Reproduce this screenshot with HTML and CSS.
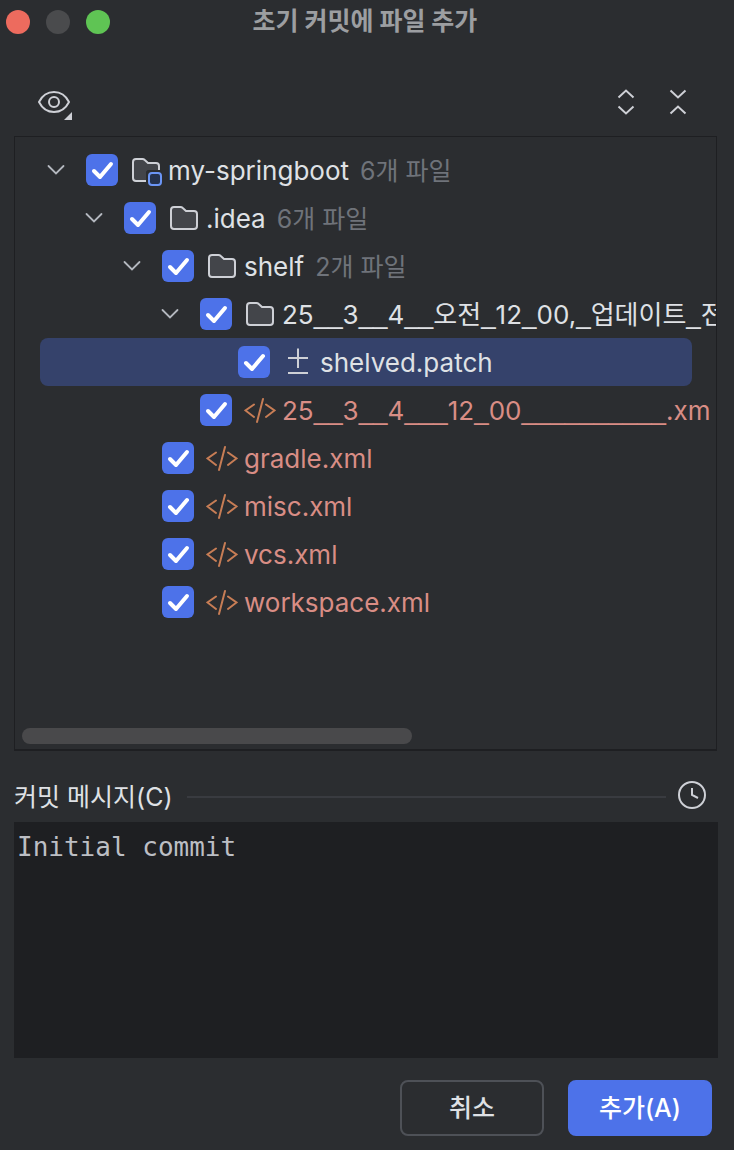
FILE: index.html
```html
<!DOCTYPE html>
<html lang="ko">
<head>
    <meta charset="UTF-8">
    <meta name="viewport" content="width=device-width, initial-scale=1.0">
    <title>초기 커밋에 파일 추가</title>
    <link rel="stylesheet" href="styles.css">
</head>
<body>
    <!-- shared icons -->
    <svg class="sprite" aria-hidden="true">
        <symbol id="i-chevron" viewBox="0 0 32 32">
            <path d="M8.500 12l7.500 7.500 7.500-7.500" fill="none" stroke="#b4b8bf" stroke-width="1.800" stroke-linecap="round"/>
        </symbol>
        <symbol id="i-folder" viewBox="0 0 32 32">
            <path d="M3 8a3 3 0 0 1 3-3h6.500q1.200 0 2 .8L18 9h8a3 3 0 0 1 3 3v12a3 3 0 0 1-3 3H6a3 3 0 0 1-3-3z" fill="#43454a" stroke="#ced0d6" stroke-width="2" stroke-linejoin="round"/>
        </symbol>
        <symbol id="i-module" viewBox="0 0 32 32">
            <path d="M3 8a3 3 0 0 1 3-3h6.500q1.200 0 2 .8L18 9h8a3 3 0 0 1 3 3v4H19a3 3 0 0 0-3 3v8H6a3 3 0 0 1-3-3z" fill="#43454a"/>
            <path d="M16 27H6a3 3 0 0 1-3-3V8a3 3 0 0 1 3-3h6.500q1.200 0 2 .8L18 9h8a3 3 0 0 1 3 3v4" fill="none" stroke="#ced0d6" stroke-width="2"/>
            <rect x="16" y="16" width="16" height="16" rx="4" fill="#2b2d30"/>
            <rect x="19" y="19" width="12" height="12" rx="3" fill="#25324d" stroke="#6b95f5" stroke-width="2"/>
        </symbol>
        <symbol id="i-xml" viewBox="0 0 32 32">
            <path d="M10 10.500L1.500 16.500l8.500 6.500M22 10.500l8.500 6L22 23M19 5l-6 23" fill="none" stroke="#c77d55" stroke-width="2" stroke-linecap="round"/>
        </symbol>
        <symbol id="i-patch" viewBox="0 0 32 32">
            <path d="M16 2.500v19.500M6 12h20M6 27h20" fill="none" stroke="#ced0d6" stroke-width="2"/>
        </symbol>
    </svg>

    <form class="dialog">
        <header class="titlebar">
            <span class="light close"></span>
            <span class="light minimize"></span>
            <span class="light maximize"></span>
            <h1>초기 커밋에 파일 추가</h1>
        </header>

        <div class="toolbar">
            <button type="button" class="tool view" aria-label="보기 옵션">
                <svg viewBox="0 0 40 40" width="40" height="40">
                    <path d="M5 20C8 14 13.500 10 20 10s12 4 15 10c-3 6-8.500 10-15 10S8 26 5 20z" fill="none" stroke="#ced0d6" stroke-width="2" stroke-linejoin="round"/>
                    <circle cx="20" cy="20" r="5" fill="none" stroke="#ced0d6" stroke-width="2"/>
                    <path d="M38 30v8h-8z" fill="#ced0d6"/>
                </svg>
            </button>
            <button type="button" class="tool" aria-label="모두 펼치기">
                <svg viewBox="0 0 32 32" width="32" height="32">
                    <path d="M8.500 11.500L16 4.500l7.500 7M8.500 20.500l7.500 7 7.500-7" fill="none" stroke="#ced0d6" stroke-width="2"/>
                </svg>
            </button>
            <button type="button" class="tool" aria-label="모두 접기">
                <svg viewBox="0 0 32 32" width="32" height="32">
                    <path d="M8.500 4.500l7.500 7 7.500-7M8.500 27.500l7.500-7 7.500 7" fill="none" stroke="#ced0d6" stroke-width="2"/>
                </svg>
            </button>
        </div>

        <div class="tree">
            <ul class="rows">
                <li class="row">
                    <button type="button" class="toggle" aria-label="접기"><svg><use href="#i-chevron"/></svg></button>
                    <input type="checkbox" id="f1" checked>
                    <label for="f1"><svg><use href="#i-module"/></svg><span class="name">my-springboot</span><span class="count">6개 파일</span></label>
                </li>
                <li class="row level-1">
                    <button type="button" class="toggle" aria-label="접기"><svg><use href="#i-chevron"/></svg></button>
                    <input type="checkbox" id="f2" checked>
                    <label for="f2"><svg><use href="#i-folder"/></svg><span class="name">.idea</span><span class="count">6개 파일</span></label>
                </li>
                <li class="row level-2">
                    <button type="button" class="toggle" aria-label="접기"><svg><use href="#i-chevron"/></svg></button>
                    <input type="checkbox" id="f3" checked>
                    <label for="f3"><svg><use href="#i-folder"/></svg><span class="name">shelf</span><span class="count">2개 파일</span></label>
                </li>
                <li class="row level-3">
                    <button type="button" class="toggle" aria-label="접기"><svg><use href="#i-chevron"/></svg></button>
                    <input type="checkbox" id="f4" checked>
                    <label for="f4"><svg><use href="#i-folder"/></svg><span class="name">25<i>__</i>3<i>__</i>4<i>__</i>오전<i>_</i>12<i>_</i>00,<i>_</i>업데이트<i>_</i>전</span></label>
                </li>
                <li class="row level-4 leaf selected">
                    <input type="checkbox" id="f5" checked>
                    <label for="f5"><svg><use href="#i-patch"/></svg><span class="name">shelved.patch</span></label>
                </li>
                <li class="row level-3 leaf new">
                    <input type="checkbox" id="f6" checked>
                    <label for="f6"><svg><use href="#i-xml"/></svg><span class="name">25<i>__</i>3<i>__</i>4<i>___</i>12<i>_</i>00<i>__________</i>.xm</span></label>
                </li>
                <li class="row level-2 leaf new">
                    <input type="checkbox" id="f7" checked>
                    <label for="f7"><svg><use href="#i-xml"/></svg><span class="name">gradle.xml</span></label>
                </li>
                <li class="row level-2 leaf new">
                    <input type="checkbox" id="f8" checked>
                    <label for="f8"><svg><use href="#i-xml"/></svg><span class="name">misc.xml</span></label>
                </li>
                <li class="row level-2 leaf new">
                    <input type="checkbox" id="f9" checked>
                    <label for="f9"><svg><use href="#i-xml"/></svg><span class="name">vcs.xml</span></label>
                </li>
                <li class="row level-2 leaf new">
                    <input type="checkbox" id="f10" checked>
                    <label for="f10"><svg><use href="#i-xml"/></svg><span class="name">workspace.xml</span></label>
                </li>
            </ul>
            <div class="scrollbar"></div>
        </div>

        <div class="message-head">
            <label for="message">커밋 메시지(C)</label>
            <span class="line"></span>
            <button type="button" class="tool" aria-label="메시지 기록">
                <svg viewBox="0 0 32 32" width="32" height="32">
                    <circle cx="16" cy="16" r="13" fill="none" stroke="#ced0d6" stroke-width="2"/>
                    <path d="M16 9v7l6 3" fill="none" stroke="#ced0d6" stroke-width="2"/>
                </svg>
            </button>
        </div>
        <textarea id="message" spellcheck="false">Initial commit</textarea>

        <footer class="actions">
            <button type="button" class="btn">취소</button>
            <button type="submit" class="btn primary">추가(A)</button>
        </footer>
    </form>
</body>
</html>
```
FILE: styles.css
```css
* {
    box-sizing: border-box;
}
body {
    margin: 0;
    background: #2b2d30;
    color: #dfe1e5;
    font-family: Inter, "Noto Sans CJK KR", sans-serif;
    font-size: 26px;
    line-height: 32px;
}
button {
    padding: 0;
    border: none;
    background: none;
    color: inherit;
    font: inherit;
    cursor: pointer;
}
svg {
    display: block;
    flex: none;
}
.sprite {
    display: none;
}
.dialog {
    display: flex;
    flex-direction: column;
    min-height: 100vh;
}
.titlebar {
    display: flex;
    align-items: center;
    gap: 16px;
    height: 44px;
    padding: 0 6px;
}
.titlebar h1 {
    flex: 1;
    margin: 0 124px 2px 0;
    color: #9c9ea1;
    font-size: 25px;
    font-weight: 700;
    text-align: center;
    white-space: nowrap;
}
.light {
    width: 24px;
    height: 24px;
    border-radius: 50%;
}
.close {
    background: #ed6b5e;
}
.minimize {
    background: #4a4b4d;
}
.maximize {
    background: #5fc454;
}

.toolbar {
    display: flex;
    align-items: center;
    gap: 20px;
    height: 92px;
    padding: 24px 40px 0 34px;
}
.view {
    margin-right: auto;
}

/* file tree */
.tree {
    display: flex;
    flex: 1;
    flex-direction: column;
    margin: 0 17px 0 14px;
    padding: 9px 0 5px;
    border: 1px solid #1e1f22;
    border-bottom-width: 2px;
    overflow: hidden;
}
.rows {
    flex: 1;
    margin: 0 24px 0 25px;
    padding: 0;
    list-style: none;
}
.row {
    display: flex;
    align-items: center;
    height: 48px;
    border-radius: 8px;
    white-space: nowrap;
}
.level-1 {
    padding-left: 38px;
}
.level-2 {
    padding-left: 76px;
}
.level-3 {
    padding-left: 114px;
}
.level-4 {
    padding-left: 152px;
}
.row svg {
    width: 32px;
    height: 32px;
}
.row label {
    display: flex;
    align-items: center;
    margin-left: 12px;
}
.row input {
    flex: none;
    appearance: none;
    width: 32px;
    height: 32px;
    margin: 0 0 0 14px;
    border-radius: 6px;
    background: #43454a;
}
.row input:checked {
    background: #4d72e9 url("data:image/svg+xml,%3Csvg xmlns='http://www.w3.org/2000/svg' viewBox='0 0 32 32'%3E%3Cpath d='M8 17l6 6L25 10' fill='none' stroke='white' stroke-width='4' stroke-linecap='round' stroke-linejoin='round'/%3E%3C/svg%3E");
}
.leaf input {
    margin-left: 46px;
}
.name {
    margin-left: 6px;
    padding-top: 2px;
}
/* wider underscores */
.name i {
    font-family: "Liberation Sans", sans-serif;
    font-style: normal;
}
.selected {
    background: #35426b;
}
.new {
    color: #d98d85;
}
.count {
    margin-left: 11px;
    padding-top: 2px;
    color: #6f737a;
    font-size: 25px;
}
.scrollbar {
    width: 390px;
    max-width: 56%;
    height: 16px;
    margin-left: 7px;
    border-radius: 8px;
    background: #49494b;
}

/* commit message */
.message-head {
    display: flex;
    align-items: center;
    height: 71px;
    padding: 16px 26px 0 14px;
}
.message-head label {
    padding-top: 4px;
    font-size: 25px;
}
.line {
    flex: 1;
    height: 2px;
    margin: 4px 10px 0 14px;
    background: #393b40;
}
textarea {
    display: block;
    height: 236px;
    margin: 0 16px 0 14px;
    padding: 9px 3px;
    border: none;
    outline: none;
    background: #1e1f22;
    color: #bcbec4;
    font: 26px/32px "DejaVu Sans Mono", "Noto Sans CJK KR", monospace;
    resize: none;
}

.actions {
    display: flex;
    justify-content: flex-end;
    gap: 24px;
    padding: 22px 22px 14px;
}
.btn {
    width: 144px;
    height: 56px;
    border: 2px solid #4e5157;
    border-radius: 8px;
    font-size: 25px;
    font-weight: 500;
}
.primary {
    border-color: #4d72e9;
    background: #4d72e9;
    color: #fff;
}
```
